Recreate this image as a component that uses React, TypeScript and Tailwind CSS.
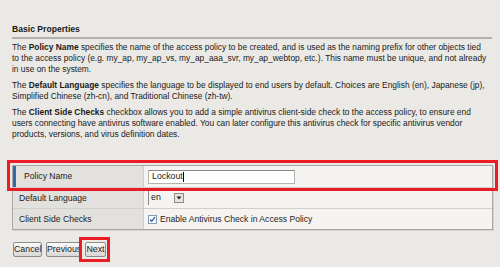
import React from 'react';

const font = { fontFamily: '"Liberation Sans", Arial, sans-serif' };

function Para({ children }: { children: React.ReactNode }) {
  return <p className="text-[8.4px] leading-[11px] text-[#1a1a1a] mb-[5px] whitespace-nowrap">{children}</p>;
}

function Btn({ label, w }: { label: string; w: string }) {
  return (
    <button className={`${w} h-[15px] text-[8.8px] leading-[13px] text-[#222] bg-gradient-to-b from-[#fbfbfa] to-[#d9d7d3] border border-[#8e8c88] rounded-[2px]`}>
      {label}
    </button>
  );
}

export default function App() {
  return (
    <div className="w-[500px] h-[267px] overflow-hidden bg-[#ebe9e5] pl-[12px] pr-[8px] pt-[24px]" style={font}>
      <div className="text-[8.6px] font-bold text-[#1a1a1a] pb-[2px] border-b-2 border-[#b3b1ad] leading-[11px]">
        Basic Properties
      </div>

      <div className="mt-[3px]">
        <Para>
          The <b>Policy Name</b> specifies the name of the access policy to be created, and is used as the naming prefix for other objects tied
          <br />
          to the access policy (e.g. my_ap, my_ap_vs, my_ap_aaa_svr, my_ap_webtop, etc.). This name must be unique, and not already
          <br />
          in use on the system.
        </Para>
        <Para>
          The <b>Default Language</b> specifies the language to be displayed to end users by default. Choices are English (en), Japanese (jp),
          <br />
          Simplified Chinese (zh-cn), and Traditional Chinese (zh-tw).
        </Para>
        <Para>
          The <b>Client Side Checks</b> checkbox allows you to add a simple antivirus client-side check to the access policy, to ensure end
          <br />
          users connecting have antivirus software enabled. You can later configure this antivirus check for specific antivirus vendor
          <br />
          products, versions, and virus definition dates.
        </Para>
      </div>

      {/* form table */}
      <div className="mt-[25px] w-[481px] border border-[#a9a7a3] shadow-[1px_1px_0_#d6d4d0] text-[8.6px] text-[#222]">
        <div className="relative flex h-[22px] border-b border-[#d2d0cc]">
          <div className="w-[3px] bg-[#3a67a8]" />
          <div className="w-[128px] bg-[#e3e1dd] border-r border-[#cfcdc9] flex items-center pl-[8px]">Policy Name</div>
          <div className="flex-1 bg-[#f5f4f2] flex items-center pl-[4px]">
            <div className="w-[147px] h-[14px] bg-white border border-[#b6b4b0] border-t-[#8a8884] flex items-center pl-[3px] text-[8.8px]">
              Lockout<span className="w-px h-[10px] bg-black" />
            </div>
          </div>
          <span className="absolute -left-[6px] -right-[6px] -top-[6px] -bottom-[4px] border-[3px] border-[#ec1c24] pointer-events-none" />
        </div>
        <div className="flex h-[21px] border-b border-[#d2d0cc]">
          <div className="w-[131px] bg-[#e3e1dd] border-r border-[#cfcdc9] flex items-center pl-[6px]">Default Language</div>
          <div className="flex-1 bg-[#f5f4f2] flex items-center pl-[4px]">
            <div className="h-[14px] w-[37px] flex items-center border-l border-[#8a8884] pl-[2px] text-[8.8px]">
              <span className="flex-1">en</span>
              <span className="w-[10px] h-[10px] mr-[1px] border border-[#8e8c88] bg-[#e8e6e2] flex items-center justify-center">
                <svg width="6" height="4" viewBox="0 0 6 4"><path d="M0.5 0.5h5L3 3.5z" fill="#222" /></svg>
              </span>
            </div>
          </div>
        </div>
        <div className="flex h-[20px]">
          <div className="w-[131px] bg-[#e3e1dd] border-r border-[#cfcdc9] flex items-center pl-[6px]">Client Side Checks</div>
          <div className="flex-1 bg-[#f5f4f2] flex items-center pl-[4px] gap-[3px]">
            <span className="w-[9px] h-[9px] bg-white border border-[#7f9db9] flex items-center justify-center">
              <svg width="7" height="7" viewBox="0 0 7 7"><path d="M1 3.5l1.7 1.8L6 1" stroke="#3b5ea8" strokeWidth="1.3" fill="none" /></svg>
            </span>
            <span>Enable Antivirus Check in Access Policy</span>
          </div>
        </div>
      </div>

      <div className="mt-[12px] flex items-center gap-[4px] pl-[1px]">
        <Btn label="Cancel" w="w-[29px]" />
        <Btn label="Previous" w="w-[35px]" />
        <div className="relative flex">
          <Btn label="Next" w="w-[21px]" />
          <span className="absolute -left-[6px] -right-[4px] -top-[5px] -bottom-[5px] border-[3px] border-[#ec1c24] pointer-events-none" />
        </div>
      </div>
    </div>
  );
}
